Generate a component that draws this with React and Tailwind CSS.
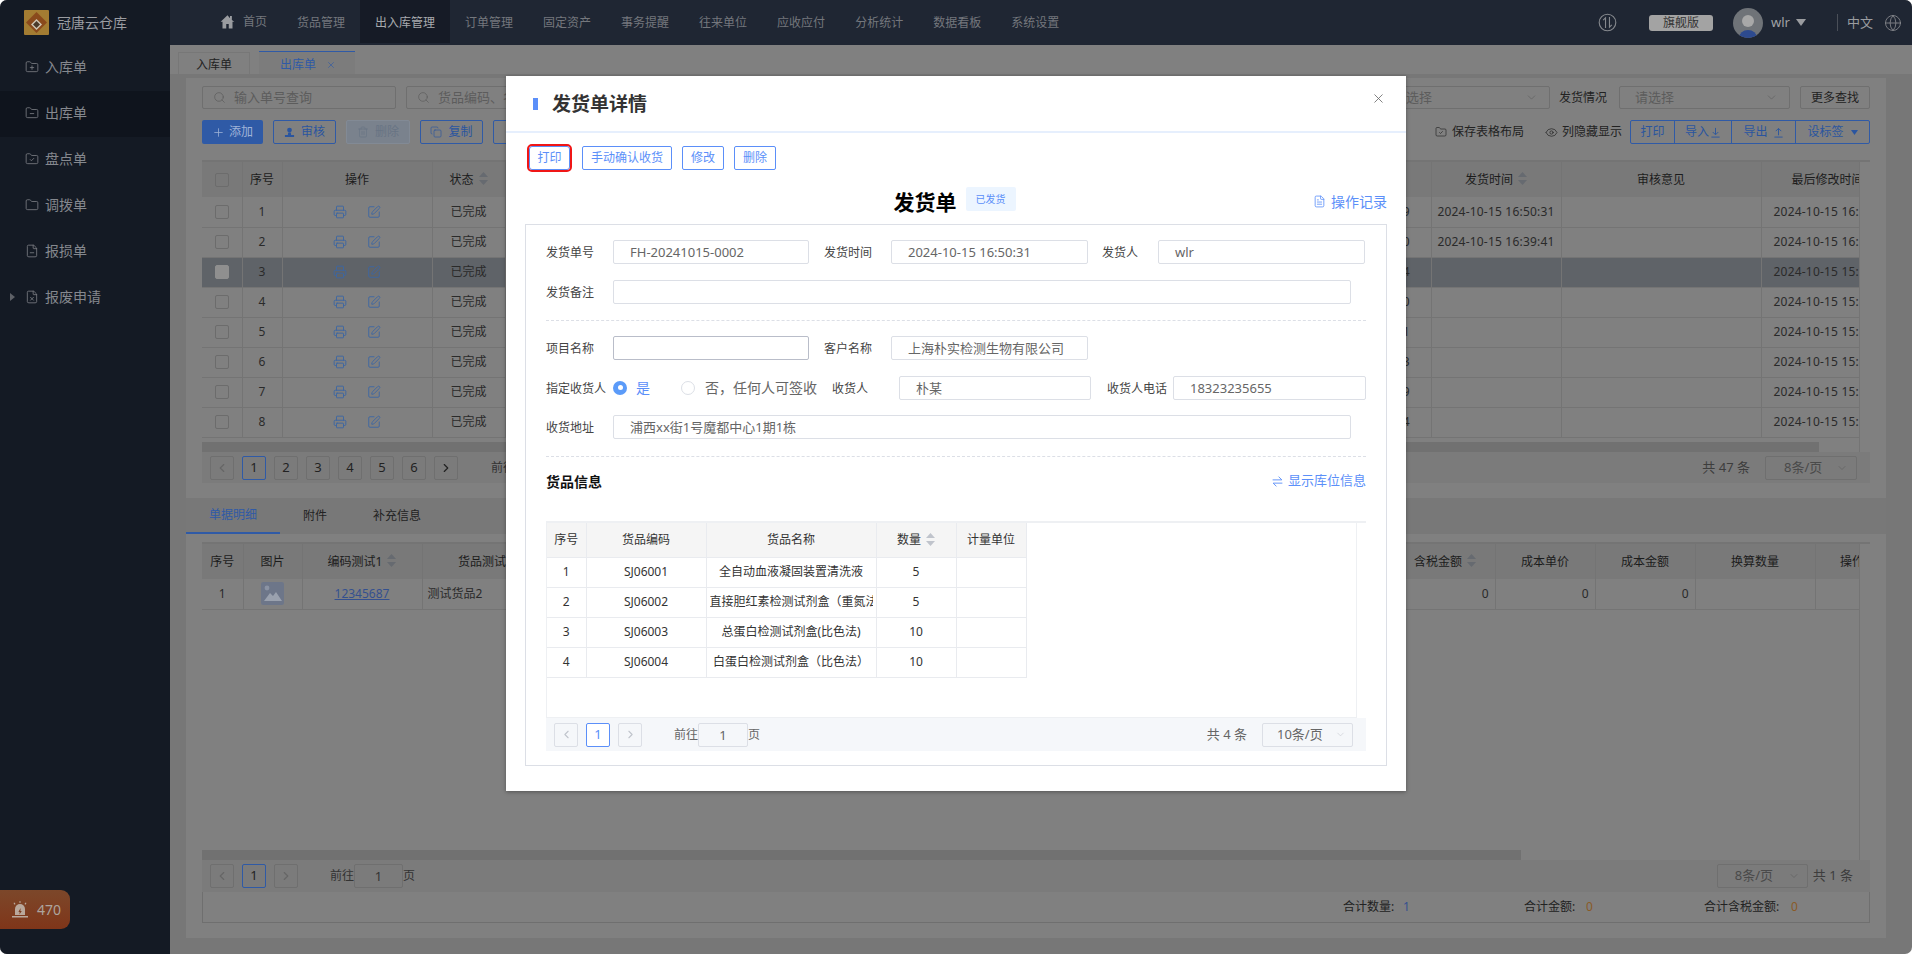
import React from 'react';
import {
  FolderPlus, FolderMinus, FolderCheck, Folder, FileMinus, FileX, Search, ChevronDown, ChevronLeft, ChevronRight,
  Plus, Trash2, Copy, Eye, Printer, SquarePen, X, FileText, Globe,
} from 'lucide-react';

const navItems = ['货品管理', '出入库管理', '订单管理', '固定资产', '事务提醒', '往来单位', '应收应付', '分析统计', '数据看板', '系统设置'];

const sideItems = [
  { label: '入库单', Icon: FolderPlus },
  { label: '出库单', Icon: FolderMinus, active: true },
  { label: '盘点单', Icon: FolderCheck },
  { label: '调拨单', Icon: Folder },
  { label: '报损单', Icon: FileMinus },
  { label: '报废申请', Icon: FileX, caret: true },
];

const topRows = [
  { n: 1, tail: '9', sent: '2024-10-15 16:50:31', edit: '2024-10-15 16:50:31' },
  { n: 2, tail: '0', sent: '2024-10-15 16:39:41', edit: '2024-10-15 16:39:41' },
  { n: 3, tail: '4', sent: '', edit: '2024-10-15 15:50:12', selected: true },
  { n: 4, tail: '0', sent: '', edit: '2024-10-15 15:48:20' },
  { n: 5, tail: '1', sent: '', edit: '2024-10-15 15:45:02' },
  { n: 6, tail: '3', sent: '', edit: '2024-10-15 15:41:33' },
  { n: 7, tail: '9', sent: '', edit: '2024-10-15 15:39:19' },
  { n: 8, tail: '4', sent: '', edit: '2024-10-15 15:36:44' },
];

const goods = [
  ['1', 'SJ06001', '全自动血液凝固装置清洗液', '5'],
  ['2', 'SJ06002', '直接胆红素检测试剂盒（重氮法）', '5'],
  ['3', 'SJ06003', '总蛋白检测试剂盒(比色法)', '10'],
  ['4', 'SJ06004', '白蛋白检测试剂盒（比色法）', '10'],
];

function Sort({ light }) {
  return (
    <svg width="9" height="13" viewBox="0 0 9 13" className="inline-block ml-[5px] -mt-[3px] align-middle">
      <path d="M4.5 0 9 5H0z" fill={light ? '#c0c4cc' : '#666a70'} />
      <path d="M4.5 13 9 8H0z" fill={light ? '#c0c4cc' : '#666a70'} />
    </svg>
  );
}

function PageBtn({ children, active, light, disabled }) {
  const base = 'w-[24px] h-[24px] flex items-center justify-center border rounded-[2px] text-[13px]';
  if (light) {
    return (
      <div className={`${base} ${active ? 'border-[#5b8ff9] text-[#5b8ff9] bg-white' : 'border-[#dcdfe6] text-[#c0c4cc]'}`}>{children}</div>
    );
  }
  return (
    <div className={`${base} ${active ? 'border-[#2f5aa6] text-[#2f5aa6]' : 'border-[#6f6f6f]'} ${!active && disabled ? 'text-[#666]' : 'text-[#222]'}`}>{children}</div>
  );
}

function Field({ label, labelW, inputW, value, focus }) {
  return (
    <div className="flex items-center h-[24px]">
      <div className={`${labelW} h-[24px] pt-[1px] text-[12px] leading-[24px] text-[#444] whitespace-nowrap`}>{label}</div>
      <div className={`${inputW} h-[24px] border rounded-[2px] bg-white pl-[16px] text-[13px] leading-[22px] text-[#666] whitespace-nowrap overflow-hidden ${focus ? 'border-[#b9bdc9]' : 'border-[#dcdfe6]'}`}>{value}</div>
    </div>
  );
}

function ModalBtn({ children, className }) {
  return (
    <button className={`h-[24px] border border-[#5b8ff9] rounded-[2px] bg-white text-[12px] leading-[22px] text-[#5b8ff9] ${className}`}>{children}</button>
  );
}

function GoodsModal() {
  return (
    <div className="absolute left-[506px] top-[76px] w-[900px] h-[715px] bg-white shadow-[0_1px_4px_rgba(0,0,0,0.35)]">
      <div className="h-[57px] border-b-2 border-[#e6effd] flex items-center pl-[27px] pr-[20px]">
        <div className="w-[5px] h-[12px] bg-[#5b8ff9]"></div>
        <div className="ml-[14px] text-[19px] leading-[28px] font-bold text-[#333]">发货单详情</div>
        <X size={15} strokeWidth={1.3} className="ml-auto -mt-[10px] text-[#666]" />
      </div>
      <div className="flex pl-[23px] pt-[13px]">
        <ModalBtn className="w-[41px] outline-[2.5px] outline-[#f01616] rounded-[3px]">打印</ModalBtn>
        <ModalBtn className="w-[90px] ml-[12px]">手动确认收货</ModalBtn>
        <ModalBtn className="w-[42px] ml-[10px]">修改</ModalBtn>
        <ModalBtn className="w-[42px] ml-[10px]">删除</ModalBtn>
      </div>
      <div className="flex mt-[17px] h-[37px]">
        <div className="flex-1"></div>
        <div className="ml-[16px] text-[21px] leading-[30px] font-bold text-black">发货单</div>
        <div className="ml-[9px] w-[50px] h-[24px] bg-[#ecf5ff] rounded-[2px] text-[10px] leading-[24px] text-center text-[#5b8ff9]">已发货</div>
        <div className="flex-1 flex justify-end pr-[19px] pt-[2px]">
          <div className="flex items-center h-[24px] text-[14px] text-[#5b8ff9]">
            <FileText size={13} strokeWidth={1.5} className="mr-[5px]" />操作记录
          </div>
        </div>
      </div>
      <div className="mx-[19px] h-[542px] border border-[#dcdfe6] pt-[15px] pl-[20px] pr-[20px]">
        <div className="flex">
          <Field label="发货单号" labelW="w-[67px]" inputW="w-[196px]" value="FH-20241015-0002" />
          <div className="ml-[15px]"><Field label="发货时间" labelW="w-[67px]" inputW="w-[197px]" value="2024-10-15 16:50:31" /></div>
          <div className="ml-[14px]"><Field label="发货人" labelW="w-[56px]" inputW="w-[207px]" value="wlr" /></div>
        </div>
        <div className="mt-[16px]">
          <Field label="发货备注" labelW="w-[67px]" inputW="w-[738px]" value="" />
        </div>
        <div className="mt-[16px] border-t border-dashed border-[#dcdfe6]"></div>
        <div className="flex mt-[15px]">
          <Field label="项目名称" labelW="w-[67px]" inputW="w-[196px]" value="" focus />
          <div className="ml-[15px]"><Field label="客户名称" labelW="w-[67px]" inputW="w-[197px]" value="上海朴实检测生物有限公司" /></div>
        </div>
        <div className="flex items-center h-[24px] mt-[16px]">
          <div className="w-[67px] h-[24px] pt-[1px] text-[12px] leading-[24px] text-[#444] whitespace-nowrap">指定收货人</div>
          <div className="w-[14px] h-[14px] -mt-[1px] rounded-full bg-[#5b9bf9] flex items-center justify-center">
            <div className="w-[5px] h-[5px] rounded-full bg-white"></div>
          </div>
          <div className="ml-[9px] w-[45px] -mt-[1px] text-[14px] text-[#5b8ff9]">是</div>
          <div className="w-[14px] h-[14px] -mt-[1px] rounded-full border border-[#dcdfe6]"></div>
          <div className="ml-[10px] w-[127px] -mt-[1px] text-[14px] leading-[24px] text-[#666] whitespace-nowrap">否，任何人可签收</div>
          <Field label="收货人" labelW="w-[67px]" inputW="w-[192px]" value="朴某" />
          <div className="ml-[16px]"><Field label="收货人电话" labelW="w-[66px]" inputW="w-[193px]" value="18323235655" /></div>
        </div>
        <div className="mt-[15px]">
          <Field label="收货地址" labelW="w-[67px]" inputW="w-[738px]" value="浦西xx街1号魔都中心1期1栋" />
        </div>
        <div className="mt-[17px] border-t border-dashed border-[#dcdfe6]"></div>
        <div className="flex justify-between items-center mt-[12px] h-[24px]">
          <div className="text-[14px] font-bold text-[#111]">货品信息</div>
          <div className="flex items-center text-[13px] text-[#5b8ff9]">
            <svg width="13" height="13" viewBox="0 0 24 24" fill="none" stroke="currentColor" strokeWidth="1.7" className="mr-[4px]">
              <path d="M3 9h17l-6-6" />
              <path d="M21 15H4l6 6" />
            </svg>
            显示库位信息
          </div>
        </div>
        <div className="mt-[28px] h-[197px] border-t-2 border-[#eef0f3] border-l border-l-[#eef0f3] relative">
          <div className="w-[810px] h-[195px] border-r border-b border-[#eef0f3]">
            <table className="table-fixed border-collapse text-[12px] text-[#333] w-[479px]">
              <thead>
                <tr className="h-[34px] bg-[#f5f5f5]">
                  <th className="w-[39px] font-normal border-r border-b border-[#e9ebef]">序号</th>
                  <th className="w-[120px] font-normal border-r border-b border-[#e9ebef]">货品编码</th>
                  <th className="w-[170px] font-normal border-r border-b border-[#e9ebef]">货品名称</th>
                  <th className="w-[80px] font-normal border-r border-b border-[#e9ebef]">数量<Sort light /></th>
                  <th className="w-[70px] font-normal border-r border-b border-[#e9ebef]">计量单位</th>
                </tr>
              </thead>
              <tbody>
                {goods.map((g) => (
                  <tr key={g[0]} className="h-[30px]">
                    <td className="text-center border-r border-b border-[#e9ebef]">{g[0]}</td>
                    <td className="text-center border-r border-b border-[#e9ebef]">{g[1]}</td>
                    <td className="border-r border-b border-[#e9ebef] px-[3px]">
                      <div className="overflow-hidden whitespace-nowrap text-center">{g[2]}</div>
                    </td>
                    <td className="text-center border-r border-b border-[#e9ebef]">{g[3]}</td>
                    <td className="border-r border-b border-[#e9ebef]"></td>
                  </tr>
                ))}
              </tbody>
            </table>
          </div>
        </div>
        <div className="h-[33px] bg-[#f5f7fa] flex items-center pl-[8px] pr-[13px] text-[12px] text-[#666]">
          <PageBtn light><ChevronLeft size={13} /></PageBtn>
          <div className="ml-[8px]"><PageBtn light active>1</PageBtn></div>
          <div className="ml-[8px]"><PageBtn light><ChevronRight size={13} /></PageBtn></div>
          <div className="ml-[32px]">前往</div>
          <div className="w-[50px] h-[24px] border border-[#dcdfe6] rounded-[2px] bg-[#f5f7fa] text-center leading-[22px] text-[13px]">1</div>
          <div>页</div>
          <div className="ml-auto text-[13px]">共 4 条</div>
          <div className="ml-[15px] w-[91px] h-[24px] border border-[#dcdfe6] rounded-[2px] flex items-center pl-[14px] pr-[6px] text-[13px]">
            10条/页<ChevronDown size={11} strokeWidth={1.2} className="ml-auto text-[#c0c4cc]" />
          </div>
        </div>
      </div>
    </div>
  );
}

function TopNav() {
  return (
    <div className="h-[45px] bg-[#1f2633] flex text-[12px] text-[#74777d]">
      <div className="flex items-center pl-[50px] pr-[15px] h-[43px]">
        <svg width="15" height="15" viewBox="0 0 24 24" className="mr-[8px]" fill="#9a9ca0">
          <path d="M12 2 1 12.5h3V23h6v-7h4v7h6V12.5h3L19 9.6V3h-3v3.7z" />
        </svg>
        首页
      </div>
      {navItems.map((item) => (
        <div key={item} className={`px-[15px] h-[43px] leading-[45px] ${item === '出入库管理' ? 'bg-[#161b26] text-[#a8aaae]' : ''}`}>{item}</div>
      ))}
      <div className="flex-1"></div>
      <div className="flex items-center pr-[10px]">
        <svg width="19" height="19" viewBox="0 0 24 24" fill="none" stroke="#85888d" strokeWidth="1.4" className="mr-[32px]">
          <circle cx="12" cy="12" r="10.5" />
          <path d="M9.5 19V6L6.5 9M14.5 5v13l3-3" />
        </svg>
        <div className="w-[64px] h-[16px] rounded-[3px] bg-[#a3a3a3] text-center leading-[16px] text-[#333]">旗舰版</div>
        <svg width="30" height="30" viewBox="0 0 30 30" className="ml-[20px]">
          <defs>
            <clipPath id="av"><circle cx="15" cy="15" r="15" /></clipPath>
          </defs>
          <g clipPath="url(#av)">
            <rect width="30" height="30" fill="#6f7378" />
            <circle cx="15" cy="13" r="6" fill="#a8a8a8" />
            <ellipse cx="15" cy="30" rx="9" ry="8" fill="#2d4a8f" />
          </g>
        </svg>
        <span className="ml-[8px] text-[13px] text-[#a0a2a6]">wlr</span>
        <svg width="10" height="7" viewBox="0 0 10 7" className="ml-[6px]"><path d="M0 0h10L5 7z" fill="#9a9ca0" /></svg>
        <div className="ml-[31px] w-px h-[17px] bg-[#4a4f58]"></div>
        <span className="ml-[9px] text-[13px] text-[#9a9ca0]">中文</span>
        <Globe size={18} strokeWidth={1.1} className="ml-[11px] text-[#8a8c90]" />
      </div>
    </div>
  );
}

function Sidebar() {
  return (
    <div className="w-[170px] bg-[#141a24] flex flex-col shrink-0">
      <div className="h-[45px] flex items-center pl-[24px]">
        <svg width="25" height="25" viewBox="0 0 25 25">
          <rect width="25" height="25" rx="1" fill="#a37c32" />
          <path d="M12.5 2 23 12.5 12.5 23 2 12.5z" fill="#8a4a1c" />
          <path d="M12.5 9 18 14.5 12.5 20 7 14.5z" fill="#cfc6b4" />
          <path d="M12.5 11 16 14.5 12.5 18 9 14.5z" fill="#4a3a2a" />
        </svg>
        <span className="ml-[8px] text-[14px] text-[#9a9ca1] whitespace-nowrap">冠唐云仓库</span>
      </div>
      {sideItems.map(({ label, Icon, active, caret }) => (
        <div key={label} className={`h-[46px] flex items-center pl-[25px] pb-[3px] text-[14px] text-[#85888e] relative ${active ? 'bg-[#0f141d]' : ''}`}>
          {caret && <div className="absolute left-[10px] w-0 h-0 border-y-[4px] border-y-transparent border-l-[5px] border-l-[#5e6167]"></div>}
          <Icon size={14} strokeWidth={1.4} className="mr-[6px] text-[#7d8086]" />
          {label}
        </div>
      ))}
      <div className="mt-auto mb-[25px] w-[70px] h-[39px] rounded-r-[9px] bg-gradient-to-b from-[#7c472a] to-[#7f3519] flex items-center pl-[11px]">
        <svg width="18" height="18" viewBox="0 0 18 18" fill="#b9a89c">
          <path d="M4 8a5 5 0 0 1 10 0v6H4z" />
          <path d="M1 15h16v1.4H1z" />
          <path d="M8.5 0h1v2h-1zM2.5 2l1-.6 1 1.7-1 .6zM15.5 2l-1-.6-1 1.7 1 .6z" />
          <path d="M9.6 7 7.4 11h1.3l-.3 2.6L10.8 10H9.4z" fill="#7c3d20" />
        </svg>
        <span className="ml-[8px] text-[14px] text-[#ada59e]">470</span>
      </div>
    </div>
  );
}

function Filters() {
  return (
    <div className="flex items-center h-[23px] text-[13px] text-[#5c5c5c]">
      <div className="w-[194px] h-[23px] border border-[#6f6f6f] rounded-[2px] flex items-center pl-[10px]">
        <Search size={13} strokeWidth={1.3} className="mr-[8px]" />输入单号查询
      </div>
      <div className="ml-[10px] flex-1 h-[23px] border border-[#6f6f6f] rounded-[2px] flex items-center pl-[10px]">
        <Search size={13} strokeWidth={1.3} className="mr-[8px]" />货品编码、名称
      </div>
      <div className="ml-[10px] w-[173px] h-[23px] border border-[#6f6f6f] rounded-[2px] flex items-center pl-[15px] pr-[11px]">
        请选择<ChevronDown size={13} strokeWidth={1.2} className="ml-auto" />
      </div>
      <div className="ml-[9px] text-[12px] text-[#222]">发货情况</div>
      <div className="ml-[12px] w-[171px] h-[23px] border border-[#6f6f6f] rounded-[2px] flex items-center pl-[15px] pr-[11px]">
        请选择<ChevronDown size={13} strokeWidth={1.2} className="ml-auto" />
      </div>
      <div className="ml-[10px] w-[70px] h-[23px] border border-[#6f6f6f] rounded-[2px] text-center leading-[21px] text-[12px] text-[#222]">更多查找</div>
    </div>
  );
}

function Actions() {
  const outline = 'h-[24px] border border-[#2f5aa6] rounded-[2px] flex items-center justify-center text-[12px] text-[#2a559f]';
  const seg = 'h-[24px] border border-[#2f5aa6] -ml-px flex items-center justify-center text-[12px] text-[#2a559f]';
  return (
    <div className="flex items-center h-[24px] mt-[11px]">
      <div className="w-[61px] h-[24px] bg-[#2f5aa6] rounded-[2px] flex items-center justify-center text-[12px] text-[#a0b4d8]">
        <Plus size={13} strokeWidth={1.4} className="mr-[4px]" />添加
      </div>
      <div className={`w-[63px] ml-[10px] ${outline}`}>
        <svg width="11" height="11" viewBox="0 0 12 12" className="mr-[6px]" fill="currentColor">
          <circle cx="6" cy="3.4" r="2.6" />
          <path d="M4.6 6h2.8l.4 2.6H11V11H1V8.6h3.2z" />
        </svg>
        审核
      </div>
      <div className="w-[64px] ml-[10px] h-[24px] bg-[#7a828d] border border-[#828a95] rounded-[2px] flex items-center justify-center text-[12px] text-[#687484]">
        <Trash2 size={12} strokeWidth={1.3} className="mr-[6px]" />删除
      </div>
      <div className={`w-[63px] ml-[10px] ${outline}`}>
        <Copy size={12} strokeWidth={1.3} className="mr-[6px]" />复制
      </div>
      <div className={`w-[63px] ml-[10px] ${outline}`}></div>
      <div className="ml-auto flex items-center text-[12px] text-[#222]">
        <FolderCheck size={12} strokeWidth={1.3} className="mr-[5px]" />保存表格布局
        <Eye size={13} strokeWidth={1.3} className="ml-[21px] mr-[4px]" />列隐藏显示
      </div>
      <div className="flex ml-[9px]">
        <div className={`w-[45px] rounded-l-[2px] ${seg}`}>打印</div>
        <div className={`w-[58px] ${seg}`}>导入
          <svg width="11" height="11" viewBox="0 0 12 12" fill="none" stroke="currentColor" className="ml-[1px]"><path d="M6 1v7M3 5.5 6 8.5 9 5.5M1.5 11h9" /></svg>
        </div>
        <div className={`w-[65px] ${seg}`}>导出
          <svg width="11" height="11" viewBox="0 0 12 12" fill="none" stroke="currentColor" className="ml-[5px]"><path d="M6 9V2M3 4.5 6 1.5 9 4.5M1.5 11h9" /></svg>
        </div>
        <div className={`w-[75px] rounded-r-[2px] ${seg}`}>设标签
          <svg width="7" height="5" viewBox="0 0 7 5" className="ml-[7px]"><path d="M0 0h7L3.5 5z" fill="currentColor" /></svg>
        </div>
      </div>
    </div>
  );
}

function TopTable() {
  const th = 'font-normal border-r border-[#747474] text-[#1c1c1c]';
  const td = 'border-r border-b border-[#747474]';
  return (
    <div className="mt-[16px] border-t-2 border-[#747474]">
      <div className="w-[1658px] h-[290px] border-r border-[#747474] overflow-hidden relative">
        <table className="table-fixed border-collapse text-[12px] text-[#2a2a2a] w-[1698px]">
          <thead>
            <tr className="h-[35px] bg-[#797979]">
              <th className={`w-[40px] ${th}`}>
                <div className="w-[14px] h-[14px] border border-[#6c6c6c] rounded-[2px] mx-auto"></div>
              </th>
              <th className={`w-[40px] ${th}`}>序号</th>
              <th className={`w-[150px] ${th}`}>操作</th>
              <th className={`w-[73px] ${th}`}>状态<Sort /></th>
              <th className={`w-[926px] ${th}`}></th>
              <th className={`w-[130px] ${th}`}>发货时间<Sort /></th>
              <th className={`w-[200px] ${th}`}>审核意见</th>
              <th className={`w-[139px] text-left pl-[30px] whitespace-nowrap overflow-hidden ${th}`}>最后修改时间</th>
            </tr>
          </thead>
          <tbody>
            {topRows.map((r) => (
              <tr key={r.n} className={`h-[30px] ${r.selected ? 'bg-[#5f6368]' : ''}`}>
                <td className={td}>
                  <div className={`w-[14px] h-[14px] border rounded-[2px] mx-auto ${r.selected ? 'bg-[#8f8f8f] border-[#8f8f8f]' : 'border-[#6c6c6c]'}`}></div>
                </td>
                <td className={`text-center ${td}`}>{r.n}</td>
                <td className={td}>
                  <div className="flex justify-center items-center gap-[20px] text-[#3c66a3]">
                    <Printer size={14} strokeWidth={1.6} />
                    <SquarePen size={14} strokeWidth={1.6} />
                  </div>
                </td>
                <td className={`text-center ${td}`}>已完成</td>
                <td className={`text-right pr-[21px] ${td}`}>{r.tail}</td>
                <td className={`text-center whitespace-nowrap tracking-[0.2px] ${td}`}>{r.sent}</td>
                <td className={td}></td>
                <td className={`pl-[12px] whitespace-nowrap overflow-hidden tracking-[0.2px] ${td}`}>{r.edit}</td>
              </tr>
            ))}
          </tbody>
        </table>
        <div className="absolute left-0 bottom-0 h-[10px] w-[1617px] bg-[#717171]"></div>
      </div>
      <div className="h-[31px] bg-[#7b7b7b] flex items-center pl-[8px] pr-[13px] text-[12px] text-[#333]">
        <PageBtn disabled><ChevronLeft size={14} /></PageBtn>
        {[1, 2, 3, 4, 5, 6].map((p) => (
          <div key={p} className="ml-[8px]"><PageBtn active={p === 1}>{p}</PageBtn></div>
        ))}
        <div className="ml-[8px]"><PageBtn><ChevronRight size={14} /></PageBtn></div>
        <div className="ml-[33px]">前往</div>
        <div className="ml-auto text-[13px] text-[#3d3d3d]">共 47 条</div>
        <div className="ml-[15px] w-[92px] h-[24px] border border-[#6f6f6f] rounded-[2px] flex items-center pl-[18px] pr-[8px] text-[13px] text-[#4a4a4a]">
          8条/页<ChevronDown size={12} strokeWidth={1.2} className="ml-auto text-[#5c5c5c]" />
        </div>
      </div>
    </div>
  );
}

function BottomPanel() {
  const th = 'font-normal border-r border-[#747474] text-[#1c1c1c]';
  const td = 'border-r border-b border-[#747474]';
  return (
    <div className="px-[16px]">
      <div className="mt-[8px] border-t-2 border-[#747474]">
        <div className="w-[1658px] h-[316px] border-r border-[#747474] overflow-hidden relative">
          <table className="table-fixed border-collapse text-[12px] text-[#2a2a2a] w-[1687px]">
            <thead>
              <tr className="h-[35px] bg-[#797979]">
                <th className={`w-[41px] ${th}`}>序号</th>
                <th className={`w-[59px] ${th}`}>图片</th>
                <th className={`w-[120px] ${th}`}>编码测试1<Sort /></th>
                <th className={`w-[120px] ${th}`}>货品测试</th>
                <th className={`w-[853px] ${th}`}></th>
                <th className={`w-[100px] ${th}`}>含税金额<Sort /></th>
                <th className={`w-[100px] ${th}`}>成本单价</th>
                <th className={`w-[100px] ${th}`}>成本金额</th>
                <th className={`w-[120px] ${th}`}>换算数量</th>
                <th className={`w-[74px] ${th}`}>操作</th>
              </tr>
            </thead>
            <tbody>
              <tr className="h-[30px]">
                <td className={`text-center ${td}`}>1</td>
                <td className={td}>
                  <svg width="23" height="23" viewBox="0 0 23 23" className="mx-auto">
                    <rect width="23" height="23" rx="2" fill="#6d7689" />
                    <circle cx="6" cy="6" r="2.4" fill="#8b93a3" />
                    <path d="M3 19 9 11l3 3 3-4 6 9z" fill="#9aa1ae" />
                  </svg>
                </td>
                <td className={`text-center text-[#34508f] underline ${td}`}>12345687</td>
                <td className={`pl-[5px] ${td}`}>测试货品2</td>
                <td className={td}></td>
                <td className={`text-right pr-[6px] ${td}`}>0</td>
                <td className={`text-right pr-[6px] ${td}`}>0</td>
                <td className={`text-right pr-[6px] ${td}`}>0</td>
                <td className={td}></td>
                <td className={td}></td>
              </tr>
            </tbody>
          </table>
          <div className="absolute left-0 bottom-0 h-[10px] w-[1319px] bg-[#717171]"></div>
        </div>
      </div>
      <div className="h-[32px] bg-[#7b7b7b] flex items-center pl-[8px] pr-[17px] text-[12px] text-[#333]">
        <PageBtn disabled><ChevronLeft size={14} /></PageBtn>
        <div className="ml-[8px]"><PageBtn active>1</PageBtn></div>
        <div className="ml-[8px]"><PageBtn disabled><ChevronRight size={14} /></PageBtn></div>
        <div className="ml-[32px]">前往</div>
        <div className="w-[49px] h-[24px] border border-[#6f6f6f] rounded-[2px] text-center leading-[22px] text-[13px]">1</div>
        <div>页</div>
        <div className="ml-auto w-[91px] h-[24px] border border-[#6f6f6f] rounded-[2px] flex items-center pl-[17px] pr-[7px] text-[13px] text-[#4a4a4a]">
          8条/页<ChevronDown size={12} strokeWidth={1.2} className="ml-auto text-[#5c5c5c]" />
        </div>
        <div className="ml-[5px] text-[13px] text-[#3d3d3d]">共 1 条</div>
      </div>
      <div className="h-[31px] border border-t-0 border-[#6f6f6f] flex items-center text-[12px] text-[#222] pl-[1140px]">
        <span className="w-[60px] whitespace-nowrap">合计数量:</span><span className="w-[121px] text-[#34508f]">1</span>
        <span className="w-[62px] whitespace-nowrap">合计金额:</span><span className="w-[118px] text-[#8a5a26]">0</span>
        <span className="w-[87px] whitespace-nowrap">合计含税金额:</span><span className="text-[#8a5a26]">0</span>
      </div>
    </div>
  );
}

export default function App() {
  return (
    <div className="relative w-[1912px] h-[954px] overflow-hidden rounded-[7px] flex bg-[#777777] [font-family:'Noto_Sans','Noto_Sans_CJK_SC',sans-serif]">
      <Sidebar />
      <div className="flex-1 flex flex-col min-w-0">
        <TopNav />
        <div className="h-[29px] bg-[#808080] flex items-end pl-[8px] text-[12px]">
          <div className="w-[72px] h-[22px] border border-b-0 border-[#777] text-center leading-[24px] text-[#222]">入库单</div>
          <div className="ml-[9px] w-[96px] h-[23px] border-t border-[#2f5aa6] bg-[#7c7c7c] flex items-center pl-[21px] pt-[3px] text-[#2f5aa6]">
            出库单<X size={10} strokeWidth={1.5} className="ml-[10px]" />
          </div>
        </div>
        <div className="ml-[16px] mr-[26px] mt-[4px] h-[860px] bg-[#808080]">
          <div className="px-[16px] pt-[8px] h-[420px]">
            <Filters />
            <Actions />
            <TopTable />
          </div>
          <div className="h-[36px] bg-[#787878] flex text-[12px] text-[#222]">
            <div className="w-[94px] h-[36px] border-b-2 border-[#2f5aa6] text-center leading-[34px] text-[#2f5aa6]">单据明细</div>
            <div className="ml-[23px] leading-[36px]">附件</div>
            <div className="ml-[46px] leading-[36px]">补充信息</div>
          </div>
          <BottomPanel />
        </div>
      </div>
      <GoodsModal />
    </div>
  );
}
